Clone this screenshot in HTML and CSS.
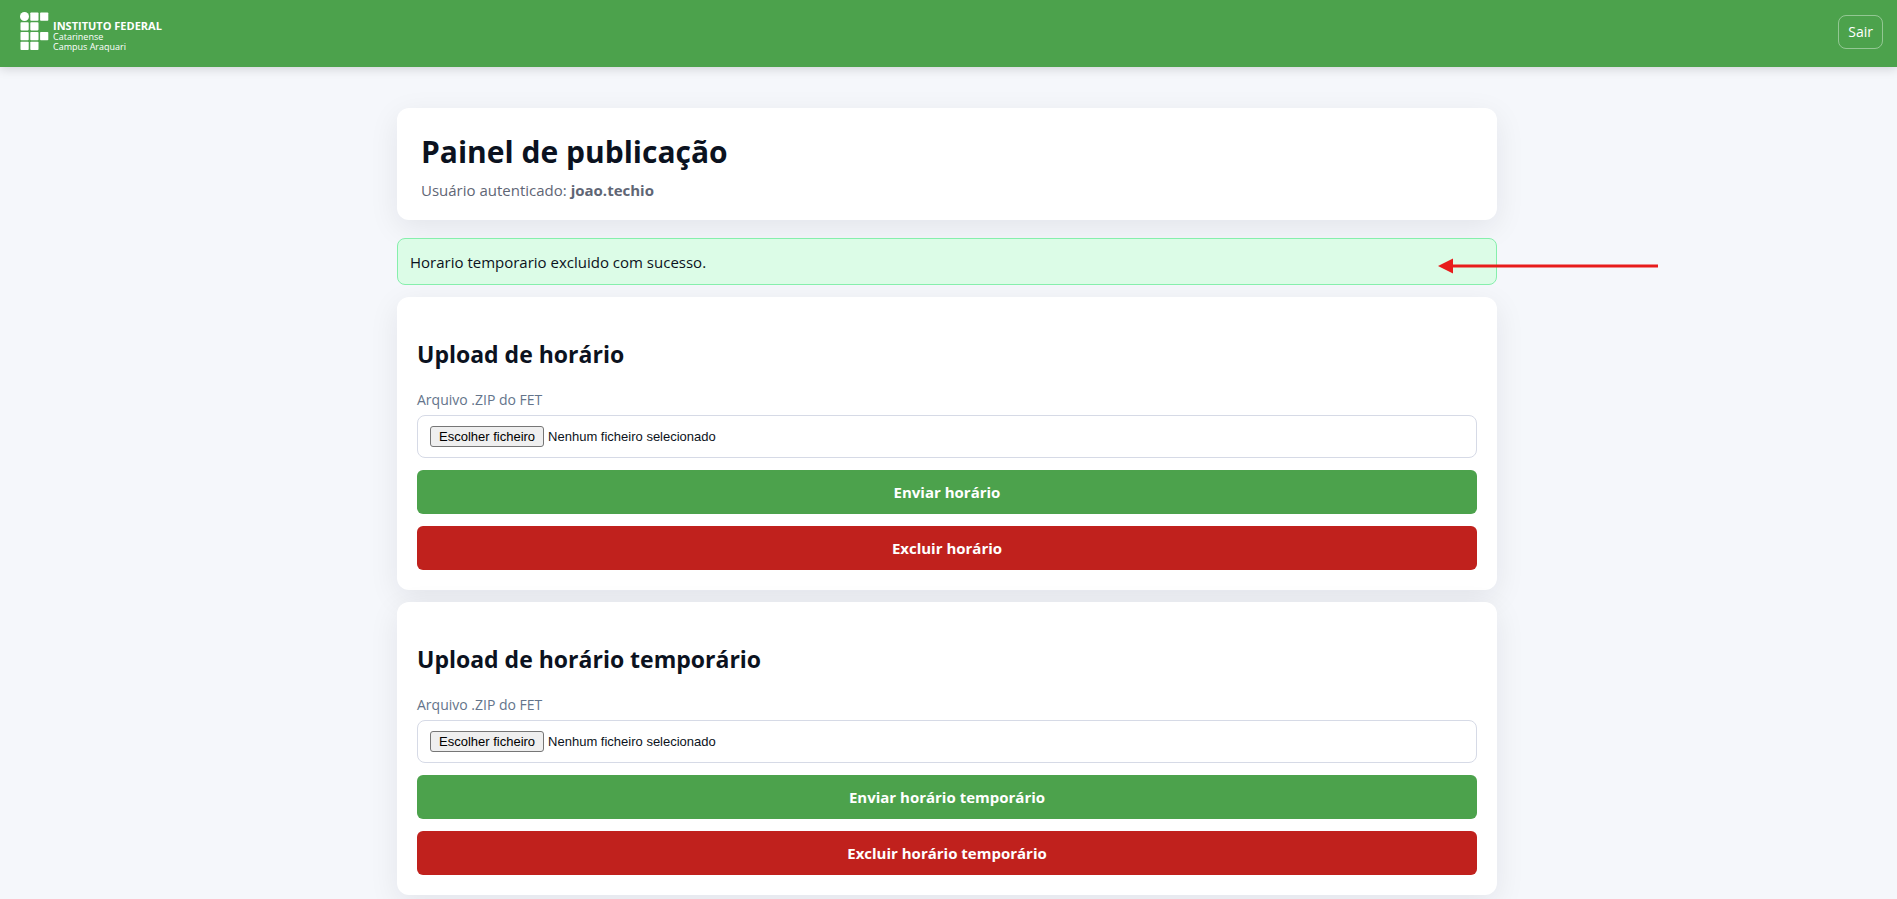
FILE: index.html
```html
<!DOCTYPE html>
<html lang="pt-BR">
<head>
  <meta charset="UTF-8">
  <meta name="viewport" content="width=device-width, initial-scale=1">
  <title>Painel de publicação</title>
  <link rel="stylesheet" href="styles.css">
</head>
<body>
  <!-- Top bar -->
  <header class="topbar">
    <a class="brand" href="#">
      <svg class="brand-mark" width="29" height="39" viewBox="0 0 29 39" fill="#fff" aria-hidden="true">
        <circle cx="4.5" cy="4.5" r="4.5"/>
        <rect x="10.3" y="0.5" width="8.2" height="8.2" rx="0.8"/>
        <rect x="20.1" y="0.5" width="8.2" height="8.2" rx="0.8"/>
        <rect x="0.5" y="10.2" width="8.2" height="8.2" rx="0.8"/>
        <rect x="10.3" y="10.2" width="8.2" height="8.2" rx="0.8"/>
        <rect x="0.5" y="20" width="8.2" height="8.2" rx="0.8"/>
        <rect x="10.3" y="20" width="8.2" height="8.2" rx="0.8"/>
        <rect x="20.1" y="20" width="8.2" height="8.2" rx="0.8"/>
        <rect x="0.5" y="29.8" width="8.2" height="8.2" rx="0.8"/>
        <rect x="10.3" y="29.8" width="8.2" height="8.2" rx="0.8"/>
      </svg>
      <span class="brand-text">
        <strong>INSTITUTO FEDERAL</strong>
        <span>Catarinense</span>
        <span>Campus Araquari</span>
      </span>
    </a>
    <button class="logout" type="button">Sair</button>
  </header>

  <main class="container">
    <section class="card intro">
      <h1>Painel de publicação</h1>
      <p>Usuário autenticado: <strong>joao.techio</strong></p>
    </section>

    <div class="alert" role="status">
      Horario temporario excluido com sucesso.
      <svg class="arrow" width="221" height="16" viewBox="0 0 221 16" aria-hidden="true">
        <path d="M14 8H220" stroke="#e81c1c" stroke-width="3"/>
        <path d="M0 8L15 0.5V15.5Z" fill="#e81c1c"/>
      </svg>
    </div>

    <!-- Regular timetable -->
    <form class="card upload">
      <h2>Upload de horário</h2>
      <label class="field-label" for="arquivo">Arquivo .ZIP do FET</label>
      <div class="file-box">
        <input type="file" id="arquivo" accept=".zip">
        <span class="file-button">Escolher ficheiro</span>
        <span>Nenhum ficheiro selecionado</span>
      </div>
      <button class="btn btn-send" type="button">Enviar horário</button>
      <button class="btn btn-delete" type="button">Excluir horário</button>
    </form>

    <!-- Temporary timetable -->
    <form class="card upload">
      <h2>Upload de horário temporário</h2>
      <label class="field-label" for="arquivo-temp">Arquivo .ZIP do FET</label>
      <div class="file-box">
        <input type="file" id="arquivo-temp" accept=".zip">
        <span class="file-button">Escolher ficheiro</span>
        <span>Nenhum ficheiro selecionado</span>
      </div>
      <button class="btn btn-send" type="button">Enviar horário temporário</button>
      <button class="btn btn-delete" type="button">Excluir horário temporário</button>
    </form>
  </main>
</body>
</html>
```
FILE: styles.css
```css
* {
  box-sizing: border-box;
}
body {
  margin: 0;
  font-family: "Segoe UI", "Open Sans", "Noto Sans", sans-serif;
  font-size: 15px;
  line-height: 21px;
  color: #0b1220;
  background: #f5f7fb;
  overflow-x: hidden;
}
.topbar {
  display: flex;
  align-items: center;
  justify-content: space-between;
  padding: 12px 14px 15px 20px;
  background: #4ca24c;
  box-shadow: 0 2px 10px rgba(0, 0, 0, 0.15);
}
.brand {
  display: flex;
  gap: 4px;
  color: #fff;
  text-decoration: none;
}
.brand-text {
  display: flex;
  flex-direction: column;
  padding-top: 7px;
  font-family: "Open Sans", "Noto Sans", sans-serif;
  font-size: 9px;
  line-height: 10px;
}
.brand-text strong {
  font-size: 11px;
  line-height: 13px;
}
.logout {
  padding: 6px 9px;
  font: inherit;
  font-size: 14px;
  line-height: 20px;
  color: #fff;
  background: transparent;
  border: 1px solid rgba(255, 255, 255, 0.4);
  border-radius: 8px;
  cursor: pointer;
}

.container {
  display: flex;
  flex-direction: column;
  gap: 12px;
  max-width: 1103px;
  margin: 41px auto;
  padding-right: 3px;
}
.card {
  background: #fff;
  border-radius: 12px;
  box-shadow: 0 8px 30px rgba(15, 18, 32, 0.08);
}
.intro {
  margin-bottom: 6px;
  padding: 22px 24px 19px;
}
.intro h1 {
  margin: 0 0 7px;
  font-size: 30px;
  line-height: 43px;
}
.intro p {
  margin: 0;
  color: #5f6675;
}
.alert {
  position: relative;
  padding: 13px 12px 11px;
  background: #dcfce7;
  border: 1px solid #86efac;
  border-radius: 8px;
}
/* pointer drawn over the edge of the alert */
.arrow {
  position: absolute;
  top: 19px;
  right: -163px;
}

.upload {
  display: flex;
  flex-direction: column;
  padding: 20px;
}
.upload h2 {
  margin: 21px 0 20px;
  font-size: 23px;
  line-height: 32px;
}
.field-label {
  margin-bottom: 5px;
  font-size: 14px;
  line-height: 20px;
  color: #64748b;
}
.file-box {
  position: relative;
  display: flex;
  align-items: center;
  gap: 4px;
  padding: 10px 12px;
  border: 1px solid #d6dae6;
  border-radius: 8px;
  font-family: Arial, "Liberation Sans", sans-serif;
  font-size: 13px;
  line-height: 15px;
}
.file-box input {
  position: absolute;
  inset: 0;
  width: 100%;
  opacity: 0;
  cursor: pointer;
}
.file-button {
  padding: 2px 8px;
  color: #000;
  background: #efefef;
  border: 1px solid #767676;
  border-radius: 3px;
}
.btn {
  margin-top: 12px;
  padding: 12px;
  font: inherit;
  font-weight: 700;
  line-height: 20px;
  color: #fff;
  border: 0;
  border-radius: 6px;
  cursor: pointer;
}
.btn-send {
  background: #4ca24c;
}
.btn-delete {
  background: #c0211d;
}
```
